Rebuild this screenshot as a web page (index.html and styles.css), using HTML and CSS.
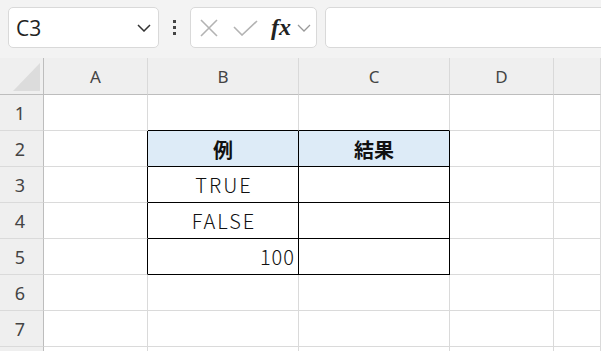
FILE: index.html
```html
<!DOCTYPE html>
<html lang="ja">
<head>
    <meta charset="UTF-8">
    <title>Sheet</title>
    <link rel="stylesheet" href="styles.css">
</head>
<body>
    <div class="toolbar">
        <div class="name-box">
            <span class="name-text">C3</span>
            <svg class="chevron" width="14" height="8" viewBox="0 0 14 8"><path d="M1 1 L7 7 L13 1" fill="none" stroke="#333" stroke-width="1.5"/></svg>
        </div>
        <div class="dots"><span></span><span></span><span></span></div>
        <div class="fx-box">
            <svg width="18" height="18" viewBox="0 0 18 18"><path d="M1 1 L17 17 M17 1 L1 17" stroke="#b3b3b3" stroke-width="1.6"/></svg>
            <svg width="25" height="16" viewBox="0 0 25 16"><path d="M1 7 L9 15 L24 1" fill="none" stroke="#b3b3b3" stroke-width="1.6"/></svg>
            <span class="fx">fx</span>
            <svg class="chevron-small" width="14" height="8" viewBox="0 0 14 8"><path d="M1 1 L7 7 L13 1" fill="none" stroke="#999" stroke-width="1.3"/></svg>
        </div>
        <div class="formula"></div>
    </div>

    <div class="sheet">
        <div class="corner"><svg width="44" height="36" viewBox="0 0 44 36"><polygon points="40,5 40,33 13,33" fill="#dcdcdc"/></svg></div>
        <div class="col-head">A</div>
        <div class="col-head">B</div>
        <div class="col-head">C</div>
        <div class="col-head">D</div>
        <div class="col-head"></div>

        <div class="row-head">1</div>
        <div class="cell"></div>
        <div class="cell bottom-black"></div>
        <div class="cell bottom-black"></div>
        <div class="cell"></div>
        <div class="cell"></div>

        <div class="row-head">2</div>
        <div class="cell right-black"></div>
        <div class="cell boxed head-fill center bold">例</div>
        <div class="cell boxed head-fill center bold">結果</div>
        <div class="cell"></div>
        <div class="cell"></div>

        <div class="row-head">3</div>
        <div class="cell right-black"></div>
        <div class="cell boxed center wide">TRUE</div>
        <div class="cell boxed"></div>
        <div class="cell"></div>
        <div class="cell"></div>

        <div class="row-head">4</div>
        <div class="cell right-black"></div>
        <div class="cell boxed center wide">FALSE</div>
        <div class="cell boxed"></div>
        <div class="cell"></div>
        <div class="cell"></div>

        <div class="row-head">5</div>
        <div class="cell right-black"></div>
        <div class="cell boxed right num">100</div>
        <div class="cell boxed"></div>
        <div class="cell"></div>
        <div class="cell"></div>

        <div class="row-head">6</div>
        <div class="cell"></div>
        <div class="cell"></div>
        <div class="cell"></div>
        <div class="cell"></div>
        <div class="cell"></div>

        <div class="row-head">7</div>
        <div class="cell"></div>
        <div class="cell"></div>
        <div class="cell"></div>
        <div class="cell"></div>
        <div class="cell"></div>

        <div class="row-head"></div>
        <div class="cell"></div>
        <div class="cell"></div>
        <div class="cell"></div>
        <div class="cell"></div>
        <div class="cell"></div>
    </div>
</body>
</html>
```

FILE: styles.css
```css
body {
    margin: 0;
    overflow: hidden;
    background-color: #ffffff;
    font-family: "Noto Sans", "Liberation Sans", sans-serif;
}

/* formula bar area */
.toolbar {
    height: 58px;
    box-sizing: border-box;
    padding: 7px 0 0 8px;
    background-color: #f3f3f3;
    display: flex;
    align-items: flex-start;
}
.name-box {
    width: 151px;
    height: 41px;
    box-sizing: border-box;
    background-color: #ffffff;
    border: 1px solid #d9d9d9;
    border-radius: 5px;
    display: flex;
    align-items: center;
    justify-content: space-between;
    padding: 0 7px 0 7px;
}
.name-text {
    font-family: "Open Sans", "Noto Sans", sans-serif;
    font-size: 21px;
    color: #222;
}
.dots {
    width: 31px;
    height: 41px;
    display: flex;
    flex-direction: column;
    align-items: center;
    justify-content: center;
    gap: 3px;
}
.dots span {
    width: 3px;
    height: 3px;
    background-color: #444;
}
.fx-box {
    width: 127px;
    height: 41px;
    box-sizing: border-box;
    background-color: #ffffff;
    border: 1px solid #d9d9d9;
    border-radius: 5px;
    display: flex;
    align-items: center;
    padding-left: 9px;
    gap: 15px;
}
.fx {
    font-family: "Liberation Serif", serif;
    font-style: italic;
    font-weight: bold;
    font-size: 24px;
    color: #222;
    margin-left: -2px;
}
.chevron-small {
    margin-left: -9px;
}
.formula {
    flex: 1;
    height: 41px;
    margin-left: 8px;
    margin-right: -10px;
    box-sizing: border-box;
    background-color: #ffffff;
    border: 1px solid #d9d9d9;
    border-radius: 5px;
}

/* grid */
.sheet {
    display: grid;
    grid-template-columns: 44px 104px 151px 151px 104px 1fr;
    grid-template-rows: 37px;
    grid-auto-rows: 36px;
}
.corner {
    background-color: #efefef;
    border-right: 1px solid #bdbdbd;
    border-bottom: 1px solid #bdbdbd;
    box-sizing: border-box;
}
.corner svg {
    display: block;
}
.col-head {
    background-color: #efefef;
    border-right: 1px solid #d9d9d9;
    border-bottom: 1px solid #bdbdbd;
    box-sizing: border-box;
    display: flex;
    align-items: center;
    justify-content: center;
    font-size: 17px;
    color: #444;
    padding-top: 1px;
}
.row-head {
    background-color: #efefef;
    border-right: 1px solid #bdbdbd;
    border-bottom: 1px solid #dadada;
    box-sizing: border-box;
    display: flex;
    align-items: center;
    justify-content: center;
    font-size: 18px;
    color: #444;
    padding-right: 3px;
}
.cell {
    border-right: 1px solid #dadada;
    border-bottom: 1px solid #dadada;
    box-sizing: border-box;
    display: flex;
    align-items: center;
    font-family: "Noto Sans CJK JP", "Noto Sans", sans-serif;
    font-size: 20px;
    color: #111;
    padding: 0 4px 0 4px;
}
.right-black {
    border-right-color: #000;
}
.bottom-black {
    border-bottom-color: #000;
}
.boxed {
    border-right-color: #000;
    border-bottom-color: #000;
}
.head-fill {
    background-color: #ddebf7;
    padding-top: 1px;
}
.center {
    justify-content: center;
}
.right {
    justify-content: flex-end;
}
.bold {
    font-weight: bold;
}
.wide {
    letter-spacing: 2px;
    padding-left: 6px;
    font-weight: 300;
}
.num {
    letter-spacing: 1px;
    padding-right: 3px;
    font-weight: 300;
}
```
